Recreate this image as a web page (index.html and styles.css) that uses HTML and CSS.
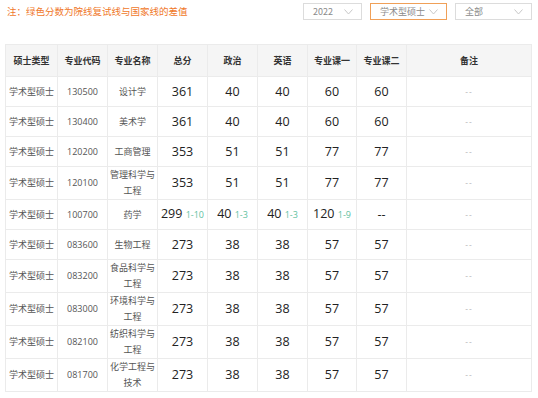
FILE: index.html
```html
<!DOCTYPE html>
<html lang="zh">
<head>
<meta charset="utf-8">
<link rel="stylesheet" href="styles.css">
</head>
<body>
<div class="top">
  <div class="note">注：绿色分数为院线复试线与国家线的差值</div>
  <div class="filters">
    <div class="sel w1"><span>2022</span><svg class="chev" width="9" height="6" viewBox="0 0 9 6"><path d="M0.5 0.5 L4.5 5 L8.5 0.5" fill="none" stroke="#c8c8c8" stroke-width="1"/></svg></div>
    <div class="sel w2 active"><span>学术型硕士</span><svg class="chev" width="9" height="6" viewBox="0 0 9 6"><path d="M0.5 0.5 L4.5 5 L8.5 0.5" fill="none" stroke="#c8c8c8" stroke-width="1"/></svg></div>
    <div class="sel w2"><span>全部</span><svg class="chev" width="9" height="6" viewBox="0 0 9 6"><path d="M0.5 0.5 L4.5 5 L8.5 0.5" fill="none" stroke="#c8c8c8" stroke-width="1"/></svg></div>
  </div>
</div>
<table class="tbl">
  <colgroup>
    <col class="c52"><col class="c50"><col class="c50"><col class="c50"><col class="c50"><col class="c50"><col class="c49"><col class="c50"><col class="c125">
  </colgroup>
  <thead>
    <tr><th>硕士类型</th><th>专业代码</th><th>专业名称</th><th>总分</th><th>政治</th><th>英语</th><th>专业课一</th><th>专业课二</th><th>备注</th></tr>
  </thead>
  <tbody>
    <tr><td class="t">学术型硕士</td><td class="code">130500</td><td class="t">设计学</td><td class="n">361</td><td class="n">40</td><td class="n">40</td><td class="n">60</td><td class="n">60</td><td class="r">--</td></tr>
    <tr><td class="t">学术型硕士</td><td class="code">130400</td><td class="t">美术学</td><td class="n">361</td><td class="n">40</td><td class="n">40</td><td class="n">60</td><td class="n">60</td><td class="r">--</td></tr>
    <tr><td class="t">学术型硕士</td><td class="code">120200</td><td class="t">工商管理</td><td class="n">353</td><td class="n">51</td><td class="n">51</td><td class="n">77</td><td class="n">77</td><td class="r">--</td></tr>
    <tr class="dbl"><td class="t">学术型硕士</td><td class="code">120100</td><td class="t">管理科学与<br>工程</td><td class="n">353</td><td class="n">51</td><td class="n">51</td><td class="n">77</td><td class="n">77</td><td class="r">--</td></tr>
    <tr class="mid"><td class="t">学术型硕士</td><td class="code">100700</td><td class="t">药学</td><td class="n">299 <small class="g">1-10</small></td><td class="n">40 <small class="g">1-3</small></td><td class="n">40 <small class="g">1-3</small></td><td class="n">120 <small class="g">1-9</small></td><td class="n">--</td><td class="r">--</td></tr>
    <tr><td class="t">学术型硕士</td><td class="code">083600</td><td class="t">生物工程</td><td class="n">273</td><td class="n">38</td><td class="n">38</td><td class="n">57</td><td class="n">57</td><td class="r">--</td></tr>
    <tr class="dbl"><td class="t">学术型硕士</td><td class="code">083200</td><td class="t">食品科学与<br>工程</td><td class="n">273</td><td class="n">38</td><td class="n">38</td><td class="n">57</td><td class="n">57</td><td class="r">--</td></tr>
    <tr class="dbl"><td class="t">学术型硕士</td><td class="code">083000</td><td class="t">环境科学与<br>工程</td><td class="n">273</td><td class="n">38</td><td class="n">38</td><td class="n">57</td><td class="n">57</td><td class="r">--</td></tr>
    <tr class="dbl"><td class="t">学术型硕士</td><td class="code">082100</td><td class="t">纺织科学与<br>工程</td><td class="n">273</td><td class="n">38</td><td class="n">38</td><td class="n">57</td><td class="n">57</td><td class="r">--</td></tr>
    <tr class="dbl"><td class="t">学术型硕士</td><td class="code">081700</td><td class="t">化学工程与<br>技术</td><td class="n">273</td><td class="n">38</td><td class="n">38</td><td class="n">57</td><td class="n">57</td><td class="r">--</td></tr>
  </tbody>
</table>
</body>
</html>
```
FILE: styles.css
```css
html, body {
  margin: 0;
  padding: 0;
  background: #ffffff;
}
body {
  font-family: "Noto Sans CJK SC", "Noto Sans", sans-serif;
  color: #333;
}
.top {
  display: flex;
  justify-content: space-between;
  align-items: flex-start;
  padding: 3px 6px 0 7px;
  height: 20px;
}
.note {
  font-size: 9.5px;
  line-height: 14px;
  color: #f0782a;
  margin-top: 1px;
}
.filters {
  display: flex;
  gap: 8px;
}
.sel {
  box-sizing: border-box;
  height: 17px;
  border: 1px solid #dcdcdc;
  display: flex;
  align-items: center;
  justify-content: space-between;
  padding: 0 8px 0 9px;
  font-size: 9px;
  color: #8a8a8a;
  background: #fff;
}
.sel.active {
  border-color: #f0a058;
}
.sel .chev {
  display: block;
}
.w1 { width: 59px; }
.w2 { width: 77px; }
.tbl {
  margin: 21px 0 0 5px;
  border-collapse: collapse;
  table-layout: fixed;
  width: 526px;
}
.c52 { width: 52px; }
.c50 { width: 50px; }
.c49 { width: 49px; }
.c125 { width: 125px; }
.tbl th, .tbl td {
  border: 1px solid #ebebeb;
  text-align: center;
  vertical-align: middle;
  padding: 0;
}
.tbl th {
  height: 31px;
  background: #f5f5f5;
  font-size: 9px;
  font-weight: 700;
  color: #333;
}
.tbl td {
  height: 29px;
  font-size: 9px;
  line-height: 16px;
  color: #555;
}
.tbl tr.dbl td { height: 32px; }
.tbl tr.mid td { height: 29px; }
.tbl td.code {
  font-family: "Open Sans", "Noto Sans", sans-serif;
  font-size: 9px;
  color: #555;
}
.tbl td.n {
  font-family: "Open Sans", "Noto Sans", sans-serif;
  font-size: 12.5px;
  color: #222;
  white-space: nowrap;
}
.tbl td.n .g {
  font-size: 9px;
  color: #5fbf9f;
}
.tbl td.r {
  font-size: 8px;
  letter-spacing: 1px;
  color: #aaa;
}
```
